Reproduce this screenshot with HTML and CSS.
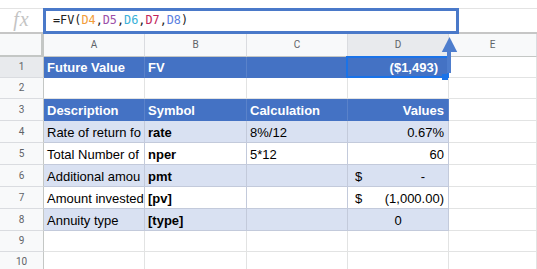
FILE: index.html
```html
<!DOCTYPE html>
<html lang="en">
<head>
    <meta charset="UTF-8">
    <title>Future Value - FV</title>
    <link rel="stylesheet" href="styles.css">
</head>
<body>

    <div class="formula-bar">
        <div class="fx">fx</div>
        <div class="formula">=FV(<span class="ref1">D4</span>,<span class="ref2">D5</span>,<span class="ref3">D6</span>,<span class="ref4">D7</span>,<span class="ref5">D8</span>)</div>
    </div>

    <!-- annotation: frame round the formula and arrow from D1 -->
    <div class="formula-frame"></div>
    <svg class="arrow" width="20" height="42" viewBox="0 0 20 42">
        <polygon points="9.5,3 1.8,18 17.2,18" fill="#4e7dcd"/>
        <rect x="7" y="17" width="4" height="22" fill="#4e7dcd"/>
    </svg>

    <div class="sheet">
        <div class="row head">
            <div class="corner"></div>
            <div>A</div>
            <div>B</div>
            <div>C</div>
            <div class="active">D</div>
            <div>E</div>
        </div>

        <div class="row r21">
            <div class="rh active">1</div>
            <div class="blue">Future Value</div>
            <div class="blue">FV</div>
            <div class="blue"></div>
            <div class="blue right current">($1,493)</div>
            <div></div>
        </div>

        <div class="row r21">
            <div class="rh">2</div>
            <div></div><div></div><div></div><div></div><div></div>
        </div>

        <div class="row r22">
            <div class="rh">3</div>
            <div class="blue">Description</div>
            <div class="blue">Symbol</div>
            <div class="blue">Calculation</div>
            <div class="blue right">Values</div>
            <div></div>
        </div>

        <div class="row r22">
            <div class="rh">4</div>
            <div class="t light">Rate of return fo</div>
            <div class="t light b">rate</div>
            <div class="t light">8%/12</div>
            <div class="t light right">0.67%</div>
            <div></div>
        </div>

        <div class="row r22">
            <div class="rh">5</div>
            <div class="t">Total Number of</div>
            <div class="t b">nper</div>
            <div class="t">5*12</div>
            <div class="t right">60</div>
            <div></div>
        </div>

        <div class="row r22">
            <div class="rh">6</div>
            <div class="t light">Additional amou</div>
            <div class="t light b">pmt</div>
            <div class="t light"></div>
            <div class="t light acct"><span>$</span><span class="dash">-</span></div>
            <div></div>
        </div>

        <div class="row r22">
            <div class="rh">7</div>
            <div class="t">Amount invested</div>
            <div class="t b">[pv]</div>
            <div class="t"></div>
            <div class="t acct"><span>$</span><span>(1,000.00)</span></div>
            <div></div>
        </div>

        <div class="row r22">
            <div class="rh">8</div>
            <div class="t light">Annuity type</div>
            <div class="t light b">[type]</div>
            <div class="t light"></div>
            <div class="t light center">0</div>
            <div></div>
        </div>

        <div class="row r21">
            <div class="rh">9</div>
            <div></div><div></div><div></div><div></div><div></div>
        </div>

        <div class="row r21">
            <div class="rh">10</div>
            <div></div><div></div><div></div><div></div><div></div>
        </div>
    </div>

</body>
</html>
```

FILE: styles.css
```css
* {
    box-sizing: border-box;
}
body {
    margin: 0;
    width: 537px;
    height: 269px;
    overflow: hidden;
    position: relative;
    background: #fff;
    font-family: "Liberation Sans", Arial, sans-serif;
}

.formula-bar {
    display: flex;
    margin-top: 8px;
    height: 26px;
    border-top: 1px solid #e3e3e3;
    border-bottom: 2px solid #c6c6c6;
}
.fx {
    width: 43px;
    text-align: center;
    font-family: "Liberation Serif", serif;
    font-style: italic;
    font-size: 20px;
    line-height: 21px;
    letter-spacing: 1px;
    color: #c4c4c4;
}
.formula {
    flex: 1;
    padding-left: 10px;
    font-family: "DejaVu Sans Mono", monospace;
    font-size: 11.8px;
    line-height: 23px;
    color: #222;
}
.ref1 { color: #f29c38; }
.ref2 { color: #9c4fa8; }
.ref3 { color: #39b0d8; }
.ref4 { color: #c2245a; }
.ref5 { color: #5b7fe0; }

.formula-frame {
    position: absolute;
    left: 43px;
    top: 8px;
    width: 416px;
    height: 26px;
    border: 3px solid #4a79c9;
}
.arrow {
    position: absolute;
    left: 440px;
    top: 34px;
    z-index: 3;
}

.row {
    display: grid;
    grid-template-columns: 44px 101px 102px 101px 101px 1fr;
}
.row > div {
    display: flex;
    align-items: flex-end;
    padding: 0 3px 1px 3px;
    border-right: 1px solid #e2e3e3;
    border-bottom: 1px solid #e2e3e3;
    white-space: nowrap;
    overflow: hidden;
    font-size: 13px;
    line-height: 16px;
    color: #000;
}
.r21 { height: 21px; }
.r22 { height: 22px; }

.head { height: 23px; }
.head > div {
    align-items: center;
    justify-content: center;
    padding: 0;
    background: #f8f9fa;
    border-right-color: #dadce0;
    border-bottom-color: #c4c7c5;
    font-family: Roboto, sans-serif;
    font-size: 10px;
    color: #5f6368;
}
.head > .corner {
    border-right: 3px solid #c4c7c5;
    border-bottom: 2px solid #c4c7c5;
}
.row > .rh {
    align-items: center;
    justify-content: center;
    padding: 0;
    background: #f8f9fa;
    border-right-color: #c4c7c5;
    border-bottom-color: #dadce0;
    font-family: Roboto, sans-serif;
    font-size: 10px;
    color: #5f6368;
}
.row > .active {
    background: #e8eaed;
}

.row > .blue {
    background: #4472c4;
    border-right-color: #5a82ca;
    border-bottom-color: #4472c4;
    color: #fff;
    font-weight: bold;
}
.row > .t {
    border-right-color: #c3cadb;
    border-bottom-color: #c3cadb;
}
.row > .light {
    background: #d9e1f2;
}
.row > .b {
    font-weight: bold;
}
.row > .right {
    justify-content: flex-end;
    padding-right: 4px;
}
.row > .center {
    justify-content: center;
}
.row > .acct {
    justify-content: space-between;
    padding-left: 7px;
    padding-right: 4px;
}
.acct .dash {
    padding-right: 19px;
}

/* selected cell D1 */
.row > .current {
    position: relative;
    overflow: visible;
    padding-right: 10px;
}
.current::after {
    content: "";
    position: absolute;
    left: -2px;
    top: -1px;
    right: -1px;
    bottom: -1px;
    border: 2px solid #1a73e8;
}
.current::before {
    content: "";
    position: absolute;
    right: 0;
    bottom: -3px;
    width: 6px;
    height: 6px;
    background: #1a73e8;
    z-index: 2;
}
```
